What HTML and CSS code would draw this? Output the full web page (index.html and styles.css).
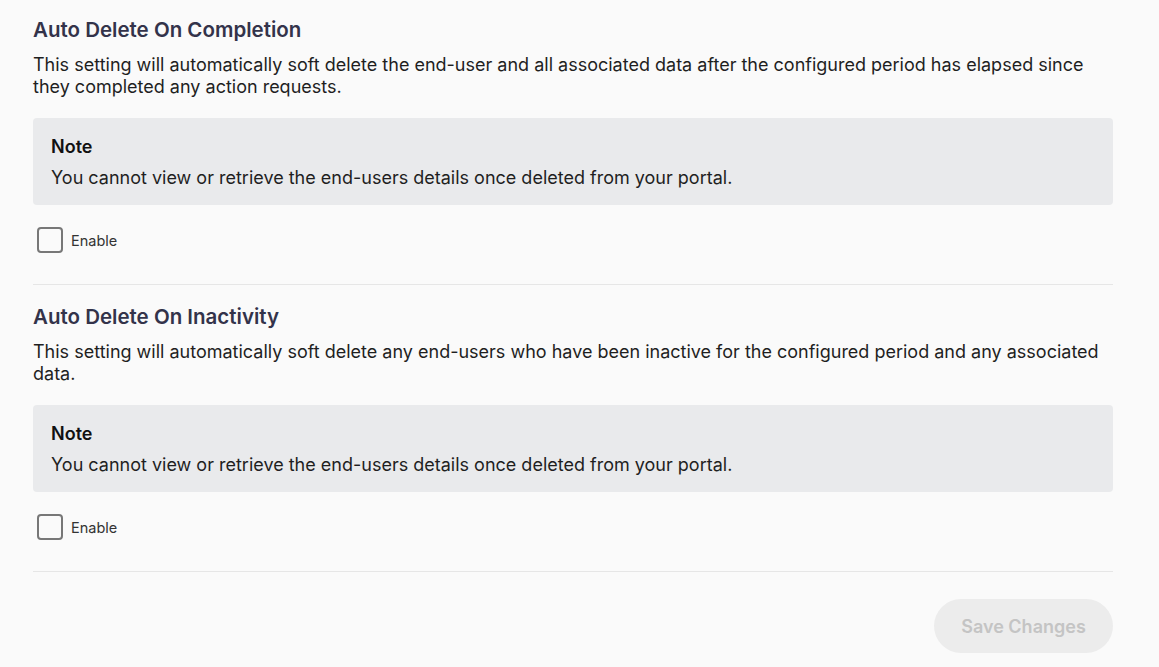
FILE: index.html
```html
<!DOCTYPE html>
<html>
<head>
<meta charset="utf-8">
<link rel="stylesheet" href="styles.css">
</head>
<body>
<div class="page">
  <section class="section">
    <h2 class="title">Auto Delete On Completion</h2>
    <p class="desc">This setting will automatically soft delete the end-user and all associated data after the configured period has elapsed since they completed any action requests.</p>
    <div class="note">
      <div class="note-title">Note</div>
      <div class="note-body">You cannot view or retrieve the end-users details once deleted from your portal.</div>
    </div>
    <label class="check">
      <span class="box"></span>
      <span class="check-label">Enable</span>
    </label>
  </section>
  <section class="section">
    <h2 class="title">Auto Delete On Inactivity</h2>
    <p class="desc">This setting will automatically soft delete any end-users who have been inactive for the configured period and any associated data.</p>
    <div class="note">
      <div class="note-title">Note</div>
      <div class="note-body">You cannot view or retrieve the end-users details once deleted from your portal.</div>
    </div>
    <label class="check">
      <span class="box"></span>
      <span class="check-label">Enable</span>
    </label>
  </section>
  <div class="actions">
    <button class="save" disabled>Save Changes</button>
  </div>
</div>
</body>
</html>
```

FILE: styles.css
```css
* { box-sizing: border-box; }
html, body {
  margin: 0;
  padding: 0;
  background: #fafafa;
}
body {
  font-family: Inter, "Noto Sans", sans-serif;
  color: #1f1f1f;
}
.page {
  width: 1080px;
  margin-left: 33px;
  padding-top: 18px;
}
.section {
  border-bottom: 1px solid #e6e6e6;
  padding-bottom: 31px;
  margin-bottom: 20px;
}
.title {
  margin: 0;
  font-size: 20.5px;
  line-height: 24px;
  font-weight: 600;
  color: #33334a;
}
.desc {
  margin: 12px 0 0;
  font-size: 18px;
  line-height: 21.6px;
  color: #1f1f1f;
}
.note {
  margin-top: 21px;
  background: #e9eaec;
  border-radius: 4px;
  padding: 18px 18px 16px;
}
.note-title {
  font-size: 18px;
  line-height: 22px;
  font-weight: 600;
  color: #111;
}
.note-body {
  margin-top: 9px;
  font-size: 18px;
  line-height: 22px;
  color: #1f1f1f;
}
.check {
  display: flex;
  align-items: center;
  gap: 8px;
  margin-top: 22px;
  padding-left: 4px;
}
.box {
  width: 26px;
  height: 26px;
  border: 2px solid #777;
  border-radius: 4px;
  background: #fafafa;
}
.check-label {
  font-size: 14.5px;
  color: #333;
}
.actions {
  display: flex;
  justify-content: flex-end;
  padding-top: 7px;
}
.save {
  width: 179px;
  height: 54px;
  border: none;
  border-radius: 27px;
  background: #ececec;
  color: #c4c4c4;
  font-family: Inter, "Noto Sans", sans-serif;
  font-size: 18px;
  font-weight: 600;
}
```
